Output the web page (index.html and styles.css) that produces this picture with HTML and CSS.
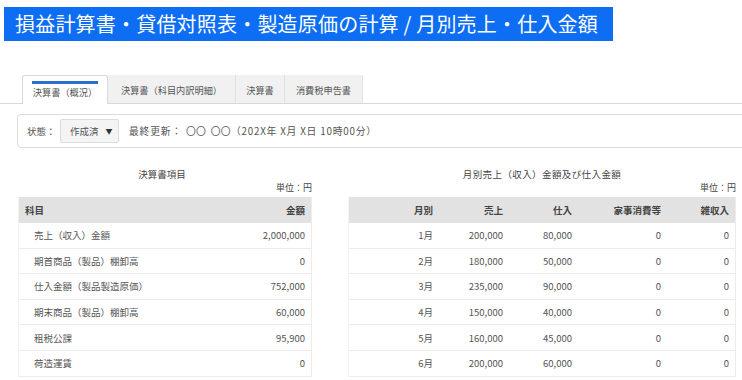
FILE: index.html
```html
<!DOCTYPE html>
<html lang="ja">
<head>
<meta charset="utf-8">
<link rel="stylesheet" href="styles.css">
</head>
<body>
<div class="title">損益計算書・貸借対照表・製造原価の計算 / 月別売上・仕入金額</div>
<div class="tabs">
  <div class="tab active">決算書（概況）</div>
  <div class="tab t2">決算書（科目内訳明細）</div>
  <div class="tab t3">決算書</div>
  <div class="tab t4">消費税申告書</div>
</div>
<div class="status">
  <span class="label">状態：</span>
  <span class="select">作成済 <span class="arrow">▼</span></span>
  <span class="updated">最終更新：<span class="who">〇〇 〇〇</span>（202X年 X月 X日 10時00分）</span>
</div>
<div class="sections">
  <div class="sec left">
    <div class="heading">決算書項目</div>
    <div class="unit">単位：円</div>
    <div class="table ltable">
      <div class="row head"><span>科目</span><span>金額</span></div>
      <div class="row"><span class="name">売上（収入）金額</span><span>2,000,000</span></div>
      <div class="row"><span class="name">期首商品（製品）棚卸高</span><span>0</span></div>
      <div class="row"><span class="name">仕入金額（製品製造原価）</span><span>752,000</span></div>
      <div class="row"><span class="name">期末商品（製品）棚卸高</span><span>60,000</span></div>
      <div class="row"><span class="name">租税公課</span><span>95,900</span></div>
      <div class="row"><span class="name">荷造運賃</span><span>0</span></div>
    </div>
  </div>
  <div class="sec right">
    <div class="heading">月別売上（収入）金額及び仕入金額</div>
    <div class="unit">単位：円</div>
    <div class="table rtable">
      <div class="row head"><span>月別</span><span>売上</span><span>仕入</span><span>家事消費等</span><span>雑収入</span></div>
      <div class="row"><span>1月</span><span>200,000</span><span>80,000</span><span>0</span><span>0</span></div>
      <div class="row"><span>2月</span><span>180,000</span><span>50,000</span><span>0</span><span>0</span></div>
      <div class="row"><span>3月</span><span>235,000</span><span>90,000</span><span>0</span><span>0</span></div>
      <div class="row"><span>4月</span><span>150,000</span><span>40,000</span><span>0</span><span>0</span></div>
      <div class="row"><span>5月</span><span>160,000</span><span>45,000</span><span>0</span><span>0</span></div>
      <div class="row"><span>6月</span><span>200,000</span><span>60,000</span><span>0</span><span>0</span></div>
    </div>
  </div>
</div>
</body>
</html>
```
FILE: styles.css
```css
html, body {
  margin: 0;
  padding: 0;
  background: #fff;
  overflow: hidden;
}
body {
  width: 742px;
  height: 380px;
  font-family: "Noto Sans CJK JP", "Noto Sans", sans-serif;
  font-size: 9.5px;
  color: #444;
}
.title {
  margin: 7px 0 0 4px;
  width: 598px;
  height: 34px;
  padding-left: 11px;
  background: #0d6ef4;
  color: #fff;
  font-size: 20px;
  line-height: 34px;
  white-space: nowrap;
  letter-spacing: 0.2px;
}
.tabs {
  display: flex;
  margin-top: 34px;
  padding-left: 22px;
  height: 28px;
  border-bottom: 1px solid #d8d8d8;
}
.tab {
  box-sizing: border-box;
  height: 28px;
  background: #f1f1f1;
  border-right: 1px solid #e2e2e2;
  line-height: 30px;
  text-align: center;
  color: #555;
  font-size: 9.2px;
}
.tab.active {
  width: 86px;
  background: #fff;
  border: 1px solid #d8d8d8;
  border-bottom: none;
  border-radius: 3px 3px 0 0;
  height: 29px;
  margin-bottom: -1px;
  position: relative;
  line-height: 32px;
}
.tab.active::before {
  content: "";
  position: absolute;
  left: 9px;
  right: 9px;
  top: 5px;
  height: 3px;
  background: #2a6fc9;
}
.t2 { width: 128px; }
.t3 { width: 49px; }
.t4 { width: 78px; }
.status {
  box-sizing: border-box;
  margin: 10px -10px 0 17px;
  height: 34px;
  border: 1px solid #dcdcdc;
  border-radius: 4px;
  display: flex;
  align-items: center;
  padding-left: 9px;
  color: #555;
}
.label { width: 33px; }
.select {
  box-sizing: border-box;
  width: 59px;
  height: 24px;
  border: 1px solid #dcdcdc;
  border-radius: 2px;
  background: #f4f4f4;
  display: flex;
  align-items: center;
  padding-left: 9px;
  margin-right: 10px;
}
.arrow {
  font-size: 7px;
  margin-left: 7px;
  color: #333;
}
.updated {
  font-size: 9.8px;
  letter-spacing: 0.8px;
  white-space: nowrap;
}
.who {
  margin-left: 4px;
  word-spacing: 2px;
  letter-spacing: 0.3px;
}
.sections {
  display: flex;
  gap: 36px;
  margin: 19px 0 0 18px;
}
.sec { display: flex; flex-direction: column; }
.left { width: 294px; }
.right { width: 388px; }
.heading {
  text-align: center;
  height: 14px;
  line-height: 14px;
  font-size: 9.5px;
}
.left .heading { padding-right: 6px; }
.right .heading { letter-spacing: 0.4px; }
.unit {
  text-align: right;
  height: 14px;
  line-height: 14px;
  margin-bottom: 2px;
  font-size: 9px;
}
.table {
  border-right: 1px solid #ececec;
  border-left: 1px solid #f3f3f3;
}
.row {
  display: grid;
  align-items: center;
  height: 25.6px;
  border-bottom: 1px solid #ececec;
  box-sizing: border-box;
  color: #555;
}
.row.head {
  height: 26px;
  background: #e2e2e2;
  font-weight: bold;
  color: #444;
  border-bottom: none;
}
.ltable .row {
  grid-template-columns: 1fr auto;
  padding: 0 6px 0 15px;
}
.ltable .row.head { padding-left: 6px; }
.ltable .row span:last-child { text-align: right; }
.rtable .row {
  grid-template-columns: 84px 70px 69px 89px 68px;
  padding-right: 8px;
}
.rtable .row span { text-align: right; }
```
